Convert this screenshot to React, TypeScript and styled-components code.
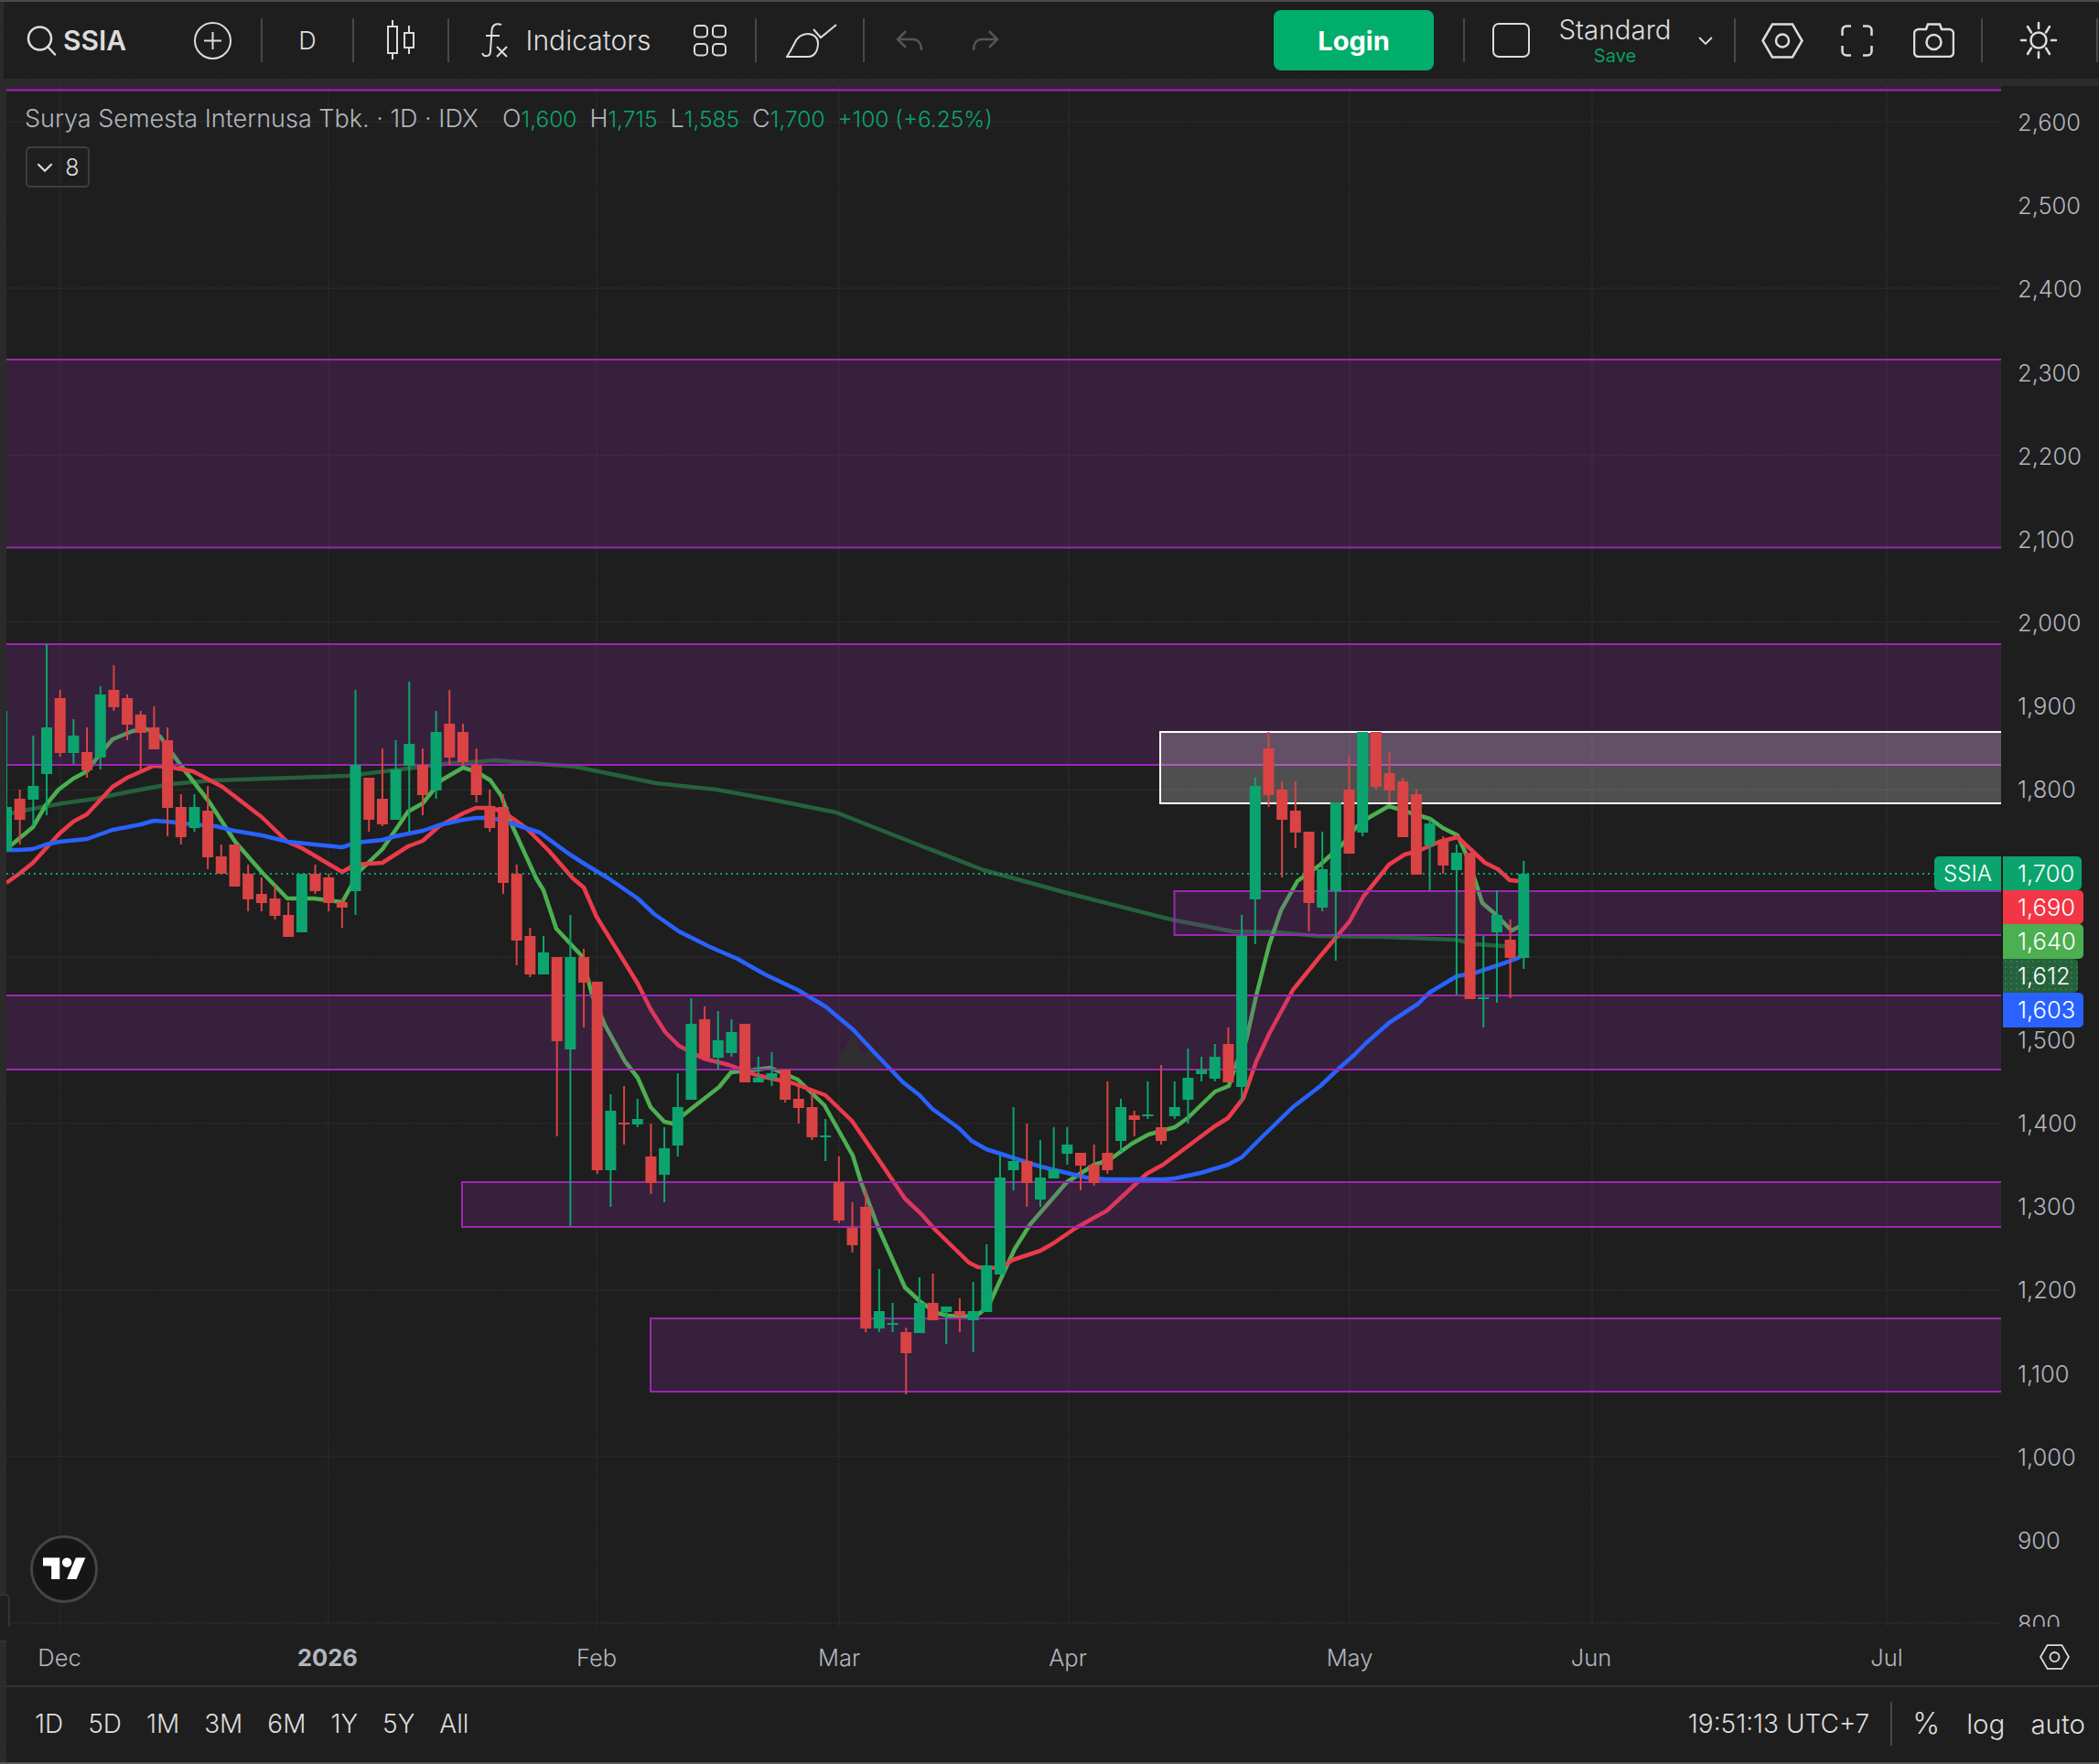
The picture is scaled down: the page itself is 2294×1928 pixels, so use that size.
import React from "react";
import styled, { createGlobalStyle } from "styled-components";

const FONT = `"Inter", "Open Sans", sans-serif`;
const GREEN = "#0ca46e";
const RED = "#d94343";
const TEXT = "#dcdcdc";
const MUTED = "#b2b5be";
const PLOT_X = 7;
const PLOT_Y = 94;
const PLOT_W = 2180;
const PLOT_H = 1684;

const GlobalStyle = createGlobalStyle`
  html, body {
    margin: 0;
    padding: 0;
    background: #1e1e1e;
    overflow: hidden;
  }
  * {
    box-sizing: border-box;
  }
`;

const Page = styled.div`
  width: 2294px;
  height: 1928px;
  display: flex;
  flex-direction: column;
  background: repeating-conic-gradient(#333 0 25%, #222 0 50%) 0 0 / 2px 2px;
  border-top: 2px solid #4a4a4a;
  border-bottom: 2px solid #555;
  font-family: ${FONT};
  font-weight: 300;
  color: ${TEXT};
  overflow: hidden;
`;

const Toolbar = styled.header`
  height: 84px;
  margin-left: 4px;
  padding-left: 25px;
  display: flex;
  align-items: center;
  background: #1e1e1e;
  flex-shrink: 0;
`;

const Slot = styled.div<{ $w: number; $ml?: number }>`
  width: ${(p) => p.$w}px;
  margin-left: ${(p) => p.$ml ?? 0}px;
  flex-shrink: 0;
  display: flex;
  flex-direction: column;
  align-items: center;
  justify-content: center;
  white-space: nowrap;
  font-size: 30px;
  svg {
    display: block;
  }
`;

const TimeframeSlot = styled(Slot)`
  font-size: 27px;
`;

const Symbol = styled(Slot)`
  font-weight: 600;
  font-size: 30px;
  align-items: flex-start;
`;

const Sep = styled.div<{ $ml: number }>`
  width: 2px;
  height: 48px;
  margin-left: ${(p) => p.$ml}px;
  background: #484848;
  flex-shrink: 0;
`;

const LoginButton = styled.button`
  all: unset;
  width: 175px;
  height: 66px;
  margin-left: 300px;
  border-radius: 8px;
  background: #00ad6b;
  color: #fff;
  font-family: ${FONT};
  font-weight: 700;
  font-size: 29px;
  text-align: center;
  flex-shrink: 0;
`;

const LayoutName = styled.div`
  font-size: 29.5px;
  line-height: 34px;
`;

const SaveLabel = styled.div`
  font-size: 20px;
  font-weight: 400;
  line-height: 24px;
  color: #0a9f63;
`;

const Gap = styled.div`
  height: 8px;
  flex-shrink: 0;
`;

const ChartRow = styled.div`
  display: flex;
  margin-left: ${PLOT_X}px;
  height: ${PLOT_H}px;
  flex-shrink: 0;
  background: #1e1e1e;
`;

const Plot = styled.div`
  position: relative;
  width: ${PLOT_W}px;
  height: ${PLOT_H}px;
  svg {
    display: block;
  }
`;

const Legend = styled.div`
  position: absolute;
  left: 20px;
  top: 19px;
  display: flex;
  align-items: center;
  height: 32px;
  font-size: 27px;
  color: ${MUTED};
  white-space: nowrap;
`;

const OhlcGroup = styled.span<{ $ml: number }>`
  margin-left: ${(p) => p.$ml}px;
`;

const Up = styled.span`
  color: ${GREEN};
  font-size: 24.5px;
`;

const CollapseButton = styled.div`
  position: absolute;
  left: 21px;
  top: 66px;
  width: 70px;
  height: 45px;
  display: flex;
  align-items: center;
  justify-content: center;
  gap: 12px;
  border: 2px solid #3d3d3d;
  border-radius: 5px;
  font-size: 25px;
  color: ${TEXT};
`;

const LogoBadge = styled.div`
  position: absolute;
  left: 26px;
  top: 1584px;
  width: 74px;
  height: 74px;
  border-radius: 50%;
  background: #161616;
  border: 3px solid #454545;
  display: flex;
  align-items: center;
  justify-content: center;
`;

const SideHandle = styled.div`
  position: absolute;
  left: -7px;
  top: 1648px;
  width: 11px;
  height: 53px;
  border: 2px solid #333;
  border-left: none;
  border-radius: 0 6px 6px 0;
  background: #1e1e1e;
`;

const SymbolTag = styled.div`
  position: absolute;
  right: 0;
  top: 842px;
  width: 73px;
  height: 37px;
  border-radius: 5px 0 0 5px;
  background: ${GREEN};
  color: #fff;
  font-size: 24px;
  line-height: 38px;
  text-align: center;
`;

const PriceScale = styled.div`
  position: relative;
  width: 107px;
  height: ${PLOT_H}px;
  overflow: hidden;
  background: #1e1e1e;
`;

const PriceTick = styled.div`
  position: absolute;
  left: 18px;
  font-size: 25.5px;
  line-height: 30px;
  color: ${MUTED};
`;

const TagStack = styled.div`
  position: absolute;
  left: 2px;
  top: 842px;
  display: flex;
  flex-direction: column;
  align-items: flex-start;
`;

const PriceTag = styled.div<{ $bg: string; $w: number; $h: number; $dotted?: boolean }>`
  width: ${(p) => p.$w}px;
  height: ${(p) => p.$h}px;
  padding-left: 16px;
  background-color: ${(p) => p.$bg};
  background-image: ${(p) => (p.$dotted ? "radial-gradient(#33774c 1px, transparent 1px)" : "none")};
  background-size: 6px 6px;
  border-radius: 0 5px 5px 0;
  color: #fff;
  font-size: 25.5px;
  line-height: ${(p) => p.$h}px;
`;

const TimeAxis = styled.div`
  position: relative;
  height: 64px;
  margin-left: ${PLOT_X}px;
  background: #1e1e1e;
  flex-shrink: 0;
`;

const TimeLabel = styled.span<{ $bold?: boolean }>`
  position: absolute;
  top: 18px;
  transform: translateX(-50%);
  font-size: 25.5px;
  line-height: 32px;
  font-weight: ${(p) => (p.$bold ? 700 : 300)};
  color: ${MUTED};
`;

const AxisSettings = styled.div`
  position: absolute;
  left: 2222px;
  top: 19px;
`;

const Divider = styled.div`
  height: 2px;
  margin-left: ${PLOT_X}px;
  background: #333;
  flex-shrink: 0;
`;

const BottomBar = styled.footer`
  flex: 1;
  margin-left: ${PLOT_X}px;
  padding: 0 15px 3px 31px;
  display: flex;
  align-items: center;
  background: #1e1e1e;
  font-size: 28px;
  color: ${TEXT};
`;

const Ranges = styled.div`
  display: flex;
  gap: 27px;
`;

const Clock = styled.div`
  margin-left: auto;
  white-space: nowrap;
`;

const BarSep = styled.div`
  width: 2px;
  height: 48px;
  margin-left: 23px;
  background: #484848;
`;

const BarToggle = styled.div<{ $ml: number; $large?: boolean }>`
  margin-left: ${(p) => p.$ml}px;
  font-size: ${(p) => (p.$large ? 32 : 29.5)}px;
`;

// candles: up, wick top, wick bottom, body top, body bottom (page px)
type Candle = [number, number, number, number, number];
const CANDLES: Candle[] = [
  [1, 777, 930, 882, 930], [0, 863, 923, 873, 896], [1, 804, 903, 859, 874], [1, 704, 891, 795, 846],
  [0, 754, 827, 763, 823], [1, 786, 835, 804, 823], [0, 795, 850, 822, 842], [1, 750, 841, 759, 828],
  [0, 727, 777, 754, 773], [0, 759, 809, 763, 792], [0, 777, 842, 781, 801], [0, 772, 819, 795, 819],
  [0, 795, 914, 809, 883], [0, 868, 923, 882, 915], [1, 868, 909, 882, 905], [0, 859, 950, 886, 937],
  [0, 923, 955, 936, 955], [0, 923, 969, 923, 969], [0, 945, 996, 955, 983], [0, 959, 996, 977, 987],
  [0, 968, 1005, 982, 1001], [0, 986, 1024, 1000, 1024], [1, 955, 1019, 955, 1019], [0, 945, 977, 955, 974],
  [0, 955, 996, 959, 987], [0, 982, 1014, 986, 992], [1, 754, 1000, 836, 974], [0, 850, 909, 850, 896],
  [0, 818, 903, 873, 901], [1, 809, 896, 841, 896], [1, 745, 909, 813, 837], [0, 818, 891, 836, 869],
  [1, 777, 873, 800, 864], [0, 754, 836, 791, 828], [0, 791, 837, 800, 833], [0, 818, 877, 836, 869],
  [0, 863, 909, 881, 905], [0, 868, 977, 882, 965], [0, 945, 1055, 955, 1028], [0, 1014, 1068, 1023, 1065],
  [1, 1023, 1065, 1041, 1065], [0, 1046, 1242, 1046, 1138], [1, 1000, 1340, 1046, 1147], [0, 1037, 1123, 1046, 1074],
  [0, 1073, 1283, 1073, 1279], [1, 1196, 1319, 1214, 1279], [0, 1187, 1251, 1227, 1229], [1, 1201, 1232, 1223, 1229],
  [0, 1228, 1305, 1264, 1293], [1, 1232, 1314, 1255, 1284], [1, 1173, 1264, 1210, 1252], [1, 1091, 1202, 1119, 1202],
  [0, 1100, 1156, 1114, 1156], [1, 1105, 1169, 1137, 1156], [1, 1114, 1155, 1128, 1151], [0, 1119, 1183, 1119, 1183],
  [1, 1155, 1183, 1178, 1183], [1, 1150, 1187, 1173, 1179], [0, 1169, 1205, 1169, 1202], [0, 1187, 1228, 1201, 1211],
  [0, 1190, 1246, 1210, 1243], [1, 1223, 1269, 1241, 1243], [0, 1264, 1337, 1292, 1334], [0, 1314, 1369, 1342, 1361],
  [0, 1301, 1456, 1319, 1452], [1, 1387, 1456, 1433, 1452], [1, 1424, 1456, 1446, 1448], [0, 1451, 1524, 1456, 1479],
  [1, 1396, 1457, 1424, 1457], [0, 1392, 1443, 1424, 1443], [1, 1428, 1469, 1428, 1434], [0, 1419, 1456, 1433, 1438],
  [1, 1401, 1478, 1433, 1443], [1, 1360, 1434, 1383, 1434], [1, 1263, 1393, 1287, 1393], [1, 1210, 1301, 1269, 1279],
  [0, 1228, 1319, 1269, 1293], [1, 1246, 1319, 1287, 1311], [1, 1232, 1288, 1278, 1288], [1, 1232, 1273, 1251, 1261],
  [0, 1260, 1301, 1260, 1274], [0, 1251, 1296, 1273, 1293], [0, 1182, 1283, 1260, 1279], [1, 1201, 1259, 1210, 1247],
  [0, 1214, 1242, 1219, 1224], [1, 1182, 1223, 1218, 1220], [0, 1164, 1251, 1232, 1247], [1, 1182, 1223, 1210, 1220],
  [1, 1146, 1228, 1178, 1202], [1, 1155, 1182, 1169, 1174], [1, 1141, 1182, 1155, 1179], [0, 1123, 1183, 1141, 1183],
  [1, 1000, 1205, 1023, 1188], [1, 850, 1032, 859, 983], [0, 800, 882, 818, 869], [0, 854, 959, 863, 896],
  [0, 854, 927, 886, 910], [0, 909, 1018, 909, 987], [1, 909, 996, 950, 992], [1, 877, 1050, 877, 974],
  [0, 827, 933, 863, 933], [1, 800, 914, 800, 910], [0, 800, 863, 800, 860], [0, 822, 877, 845, 864],
  [0, 850, 915, 854, 915], [0, 863, 956, 868, 956], [1, 895, 973, 900, 924], [0, 914, 955, 918, 946],
  [1, 923, 1087, 932, 951], [0, 932, 1092, 932, 1092], [1, 1023, 1123, 1090, 1092], [1, 973, 1096, 1000, 1019],
  [0, 1005, 1091, 1027, 1047], [1, 941, 1059, 955, 1047],
];

const BLUE_LINE = "7,929 21,929 36,928 50,923 65,920 95,917 123,907 139,904 154,901 168,897 183,898 211,901 236,903 256,908 286,913 315,920 344,923 374,926 389,921 418,918 432,914 462,908 479,902 506,896 520,894 536,894 550,897 590,910 620,932 640,945 665,960 697,982 715,999 742,1018 776,1035 806,1048 836,1065 872,1082 902,1100 932,1125 960,1155 987,1183 1005,1197 1019,1212 1048,1233 1062,1247 1078,1256 1109,1266 1137,1275 1166,1282 1187,1287 1209,1289 1273,1289 1284,1288 1312,1282 1342,1273 1357,1265 1380,1242 1413,1210 1443,1187 1463,1168 1480,1153 1493,1140 1518,1118 1550,1097 1562,1085 1592,1067 1613,1063 1637,1055 1657,1048 1666,1043";
const RED_LINE = "7,965 21,955 36,943 64,912 80,898 95,890 123,860 139,850 168,837 183,838 211,843 243,860 286,893 314,920 330,927 374,953 388,945 418,943 446,925 462,919 480,903 506,889 520,883 536,883 550,887 575,905 600,930 626,960 638,970 652,1002 697,1075 711,1103 727,1128 742,1143 769,1157 797,1164 826,1175 867,1184 902,1197 931,1225 960,1267 989,1310 1007,1327 1021,1343 1059,1380 1069,1385 1094,1386 1107,1377 1137,1367 1151,1359 1176,1342 1210,1323 1253,1283 1271,1273 1298,1253 1326,1232 1342,1222 1359,1200 1373,1160 1387,1130 1413,1082 1443,1045 1475,1007 1490,980 1518,945 1535,934 1550,930 1573,920 1593,915 1623,943 1637,950 1650,962 1660,963";
const GREEN_LINE = "7,928 36,904 50,880 64,863 80,851 95,843 107,827 123,808 145,799 161,797 175,805 198,837 229,877 257,920 286,953 314,982 343,982 374,986 393,952 418,928 446,887 462,878 482,853 506,839 520,843 536,853 548,870 560,903 586,960 594,973 608,1015 636,1045 647,1087 661,1120 683,1160 697,1178 711,1210 726,1226 735,1228 754,1213 786,1188 799,1172 819,1170 842,1167 872,1180 901,1208 919,1240 932,1263 941,1292 960,1342 989,1407 1005,1422 1023,1435 1037,1438 1066,1439 1080,1428 1096,1393 1109,1365 1126,1338 1166,1292 1196,1273 1212,1268 1237,1250 1255,1240 1284,1232 1298,1222 1328,1193 1343,1187 1351,1163 1362,1137 1373,1088 1387,1033 1400,995 1418,963 1443,945 1467,923 1483,903 1497,893 1518,881 1540,888 1563,895 1577,905 1593,913 1602,933 1613,965 1620,987 1633,998 1652,1017 1662,1012";
const SLOW_LINE = "7,890 36,884 68,878 104,873 143,865 186,857 232,853 321,850 379,848 429,842 493,834 529,832 541,831 629,838 717,856 783,863 849,875 914,888 980,914 1075,951 1170,977 1280,1005 1347,1018 1397,1019 1440,1023 1513,1024 1590,1027 1613,1032 1657,1035";

const ZONES = [
  { x: 0, y1: 60, y2: 98.5 },
  { x: 0, y1: 393, y2: 598.5 },
  { x: 0, y1: 704, y2: 836 },
  { x: 1283.5, y1: 974, y2: 1022 },
  { x: 0, y1: 1088, y2: 1169 },
  { x: 505, y1: 1292, y2: 1341 },
  { x: 711, y1: 1441, y2: 1521 },
];

const GRID_X = [66, 359, 652, 917, 1168, 1475, 1740, 2062];
const GRID_Y = [133, 315, 498, 680, 863, 1046, 1228, 1410, 1592, 1774];
const PRICE_TICKS = [2600, 2500, 2400, 2300, 2200, 2100, 2000, 1900, 1800, 1500, 1400, 1300, 1200, 1100, 1000, 900, 800];
const priceY = (p: number) => 133 + (2600 - p) * 0.9117;
const TIME_LABELS = [
  { x: 65, label: "Dec" },
  { x: 358, label: "2026", bold: true },
  { x: 652, label: "Feb" },
  { x: 917, label: "Mar" },
  { x: 1167, label: "Apr" },
  { x: 1475, label: "May" },
  { x: 1739, label: "Jun" },
  { x: 2062, label: "Jul" },
];
const RANGES = ["1D", "5D", "1M", "3M", "6M", "1Y", "5Y", "All"];

const SearchIcon = () => (
  <svg width="33" height="33" viewBox="0 0 33 33" fill="none" stroke={TEXT} strokeWidth="2.500">
    <circle cx="14.500" cy="14" r="12.500" />
    <path d="M23 23l8 8.500" strokeLinecap="round" />
  </svg>
);

const PlusCircleIcon = () => (
  <svg width="41" height="41" viewBox="0 0 41 41" fill="none" stroke={TEXT} strokeWidth="2">
    <circle cx="20.500" cy="20.500" r="19.500" />
    <path d="M20.500 11v19M11 20.500h19" />
  </svg>
);

const CandlesIcon = () => (
  <svg width="30" height="44" viewBox="0 0 30 44" fill="none" stroke={TEXT} strokeWidth="2">
    <rect x="1" y="7" width="10" height="29" />
    <path d="M6 0v7M6 36v7" />
    <rect x="19" y="14" width="10" height="16" />
    <path d="M24 6v8M24 30v7" />
  </svg>
);

const FxIcon = () => (
  <svg width="30" height="38" viewBox="0 0 30 38" fill="none" stroke={TEXT} strokeWidth="2">
    <path d="M22 2C15 0 12 3 11.500 8L10 31C10 37 3 38 1 33" />
    <path d="M5 14h15" />
    <path d="M17 26l11 11M28 26L17 37" />
  </svg>
);

const GridIcon = () => (
  <svg width="36" height="35" viewBox="0 0 36 35" fill="none" stroke={TEXT} strokeWidth="2">
    <rect x="1" y="1" width="14" height="12.500" rx="4" />
    <rect x="21" y="1" width="14" height="12.500" rx="4" />
    <rect x="1" y="21" width="14" height="12.500" rx="4" />
    <rect x="21" y="21" width="14" height="12.500" rx="4" />
  </svg>
);

const BrushIcon = () => (
  <svg width="57" height="37" viewBox="0 0 57 37" fill="none" stroke={TEXT} strokeWidth="2">
    <path d="M1 36C5 30 7 26 9 22C12 15 17 11 24 11C30 11 35 15 35 21C35 30 31 36 24 36Z" />
    <path d="M30 6l8 9L55 1" />
  </svg>
);

const UndoIcon = ({ flip }: { flip?: boolean }) => (
  <svg width="30" height="24" viewBox="0 0 30 24" fill="none" stroke="#555" strokeWidth="2.500"
    transform={flip ? "scale(-1 1)" : undefined}>
    <path d="M11 2l-9 9 9 9M2 11h17c6 0 9 5 9 12" />
  </svg>
);

const SquareIcon = () => (
  <svg width="41" height="38" viewBox="0 0 41 38" fill="none" stroke={TEXT} strokeWidth="2">
    <rect x="1" y="1" width="39" height="36" rx="6" />
  </svg>
);

const ChevronIcon = ({ size = 18 }: { size?: number }) => (
  <svg width={size} height={size * 0.6} viewBox="0 0 18 11" fill="none" stroke={TEXT} strokeWidth="2">
    <path d="M2 2l7 7 7-7" />
  </svg>
);

const HexIcon = ({ w = 46, h = 39 }: { w?: number; h?: number }) => (
  <svg width={w} height={h} viewBox="0 0 46 39" fill="none" stroke={TEXT} strokeWidth="2.500">
    <path d="M1.500 19.500L12 1.500h22l10.500 18L34 37.500H12z" />
    <circle cx="23" cy="19.500" r="7" />
  </svg>
);

const FullscreenIcon = () => (
  <svg width="35" height="35" viewBox="0 0 35 35" fill="none" stroke={TEXT} strokeWidth="2.500">
    <path d="M1.500 12V6a4.500 4.500 0 0 1 4.500-4.500h5M24 1.500h5A4.500 4.500 0 0 1 33.500 6v6M33.500 23v6a4.500 4.500 0 0 1-4.500 4.500h-5M11 33.500H6A4.500 4.500 0 0 1 1.500 29v-6" />
  </svg>
);

const CameraIcon = () => (
  <svg width="45" height="38" viewBox="0 0 45 38" fill="none" stroke={TEXT} strokeWidth="2.500">
    <path d="M14 7l2-5.500h13L31 7h8a5 5 0 0 1 5 5v20a5 5 0 0 1-5 5H6a5 5 0 0 1-5-5V12a5 5 0 0 1 5-5z" />
    <circle cx="22.500" cy="21" r="8" />
  </svg>
);

const SunIcon = () => (
  <svg width="42" height="42" viewBox="0 0 42 42" fill="none" stroke={TEXT} strokeWidth="2.500" strokeLinecap="round">
    <circle cx="21" cy="21" r="8.500" />
    <path d="M21 2v6M21 34v6M2 21h5M35 21h5M9 6l4 6.500M33 6l-4 6.500M9 36l4-6.500M33 36l-4-6.500" />
  </svg>
);

const TvLogo = () => (
  <svg width="47" height="37" viewBox="0 0 36 28" fill="#fff">
    <path d="M14 22H7V11H0V4h14v18zM28 22h-8l7.500-18h8L28 22z" />
    <circle cx="20" cy="8" r="4" />
  </svg>
);

const ChartDrawing = () => (
  <svg width={PLOT_W} height={PLOT_H} viewBox={`${PLOT_X} ${PLOT_Y} ${PLOT_W} ${PLOT_H}`}>
    <g stroke="#272727" strokeWidth="2" strokeDasharray="3 1">
      {GRID_X.map((x) => (
        <line key={x} x1={x} x2={x} y1={PLOT_Y} y2={PLOT_Y + PLOT_H} />
      ))}
      {GRID_Y.map((y) => (
        <line key={y} x1={PLOT_X} x2={PLOT_X + PLOT_W} y1={y} y2={y} />
      ))}
    </g>
    <g fill="none" strokeWidth="4.500" strokeLinejoin="round">
      <polyline points={SLOW_LINE} stroke="#25613c" />
      <polyline points={GREEN_LINE} stroke="#4caf50" />
      <polyline points={RED_LINE} stroke="#ec3a4a" />
    </g>
    {ZONES.map((z) => (
      <rect key={z.y1} x={z.x} y={z.y1} width={PLOT_X + PLOT_W - z.x} height={z.y2 - z.y1} fill="#9c27b0" fillOpacity="0.2" />
    ))}
    <polygon points="911,1168 932,1130 943,1152 952,1147 965,1168" fill="#302e30" />
    <polyline points={BLUE_LINE} fill="none" stroke="#2962ff" strokeWidth="4.500" strokeLinejoin="round" />
    {ZONES.map((z) => (
      <rect key={z.y1} x={z.x} y={z.y1} width={PLOT_X + PLOT_W - z.x + 4} height={z.y2 - z.y1} fill="none" stroke="#9c27b0" strokeWidth="2" />
    ))}
    <rect x="1268" y="800" width="925" height="78" fill="#fff" fillOpacity="0.22" stroke="#fff" strokeWidth="2" />
    <line x1={PLOT_X} x2="2114" y1="955" y2="955" stroke={GREEN} strokeWidth="2" strokeDasharray="2 4" />
    {CANDLES.map(([up, wt, wb, bt, bb], i) => {
      const x = 7 + i * 14.675;
      const color = up ? GREEN : RED;
      return (
        <g key={i} fill={color}>
          <rect x={x - 1} y={wt} width="2" height={wb - wt} />
          <rect x={x - 6} y={bt} width="12" height={Math.max(bb - bt, 2)} />
        </g>
      );
    })}
  </svg>
);

export default function App() {
  return (
    <>
      <GlobalStyle />
      <Page>
        <Toolbar>
          <Slot $w={33}><SearchIcon /></Slot>
          <Symbol $w={69} $ml={7}>SSIA</Symbol>
          <Slot $w={41} $ml={74}><PlusCircleIcon /></Slot>
          <Sep $ml={32} />
          <TimeframeSlot $w={20} $ml={39}>D</TimeframeSlot>
          <Sep $ml={39} />
          <Slot $w={30} $ml={36}><CandlesIcon /></Slot>
          <Sep $ml={36} />
          <Slot $w={30} $ml={35}><FxIcon /></Slot>
          <Slot $w={136} $ml={19}>Indicators</Slot>
          <Slot $w={36} $ml={47}><GridIcon /></Slot>
          <Sep $ml={31} />
          <Slot $w={57} $ml={32}><BrushIcon /></Slot>
          <Sep $ml={27} />
          <Slot $w={30} $ml={34}><UndoIcon /></Slot>
          <Slot $w={30} $ml={53}><UndoIcon flip /></Slot>
          <LoginButton>Login</LoginButton>
          <Sep $ml={32} />
          <Slot $w={41} $ml={30}><SquareIcon /></Slot>
          <Slot $w={122} $ml={32}>
            <LayoutName>Standard</LayoutName>
            <SaveLabel>Save</SaveLabel>
          </Slot>
          <Slot $w={18} $ml={29}><ChevronIcon /></Slot>
          <Sep $ml={22} />
          <Slot $w={46} $ml={28}><HexIcon /></Slot>
          <Slot $w={35} $ml={41}><FullscreenIcon /></Slot>
          <Slot $w={45} $ml={44}><CameraIcon /></Slot>
          <Sep $ml={29} />
          <Slot $w={42} $ml={40}><SunIcon /></Slot>
          <Sep $ml={42} />
        </Toolbar>
        <Gap />
        <ChartRow>
          <Plot>
            <ChartDrawing />
            <Legend>
              Surya Semesta Internusa Tbk. · 1D · IDX
              <OhlcGroup $ml={26}>O<Up>1,600</Up></OhlcGroup>
              <OhlcGroup $ml={14}>H<Up>1,715</Up></OhlcGroup>
              <OhlcGroup $ml={14}>L<Up>1,585</Up></OhlcGroup>
              <OhlcGroup $ml={14}>C<Up>1,700</Up></OhlcGroup>
              <OhlcGroup $ml={14}><Up>+100 (+6.25%)</Up></OhlcGroup>
            </Legend>
            <CollapseButton><ChevronIcon size={20} />8</CollapseButton>
            <LogoBadge><TvLogo /></LogoBadge>
            <SideHandle />
            <SymbolTag>SSIA</SymbolTag>
          </Plot>
          <PriceScale>
            {PRICE_TICKS.map((p) => (
              <PriceTick key={p} style={{ top: priceY(p) - PLOT_Y - 14 }}>
                {p.toLocaleString("en-US")}
              </PriceTick>
            ))}
            <TagStack>
              <PriceTag $bg={GREEN} $w={86} $h={37}>1,700</PriceTag>
              <PriceTag $bg="#f23645" $w={88} $h={37}>1,690</PriceTag>
              <PriceTag $bg="#4caf50" $w={88} $h={38}>1,640</PriceTag>
              <PriceTag $bg="#25613c" $w={82} $h={37} $dotted>1,612</PriceTag>
              <PriceTag $bg="#2962ff" $w={88} $h={38}>1,603</PriceTag>
            </TagStack>
          </PriceScale>
        </ChartRow>
        <TimeAxis>
          {TIME_LABELS.map((t) => (
            <TimeLabel key={t.label} $bold={t.bold} style={{ left: t.x - PLOT_X }}>
              {t.label}
            </TimeLabel>
          ))}
          <AxisSettings><HexIcon w={33} h={28} /></AxisSettings>
        </TimeAxis>
        <Divider />
        <BottomBar>
          <Ranges>
            {RANGES.map((r) => (
              <span key={r}>{r}</span>
            ))}
          </Ranges>
          <Clock>19:51:13 UTC+7</Clock>
          <BarSep />
          <BarToggle $ml={22} $large>%</BarToggle>
          <BarToggle $ml={29}>log</BarToggle>
          <BarToggle $ml={28}>auto</BarToggle>
        </BottomBar>
      </Page>
    </>
  );
}
